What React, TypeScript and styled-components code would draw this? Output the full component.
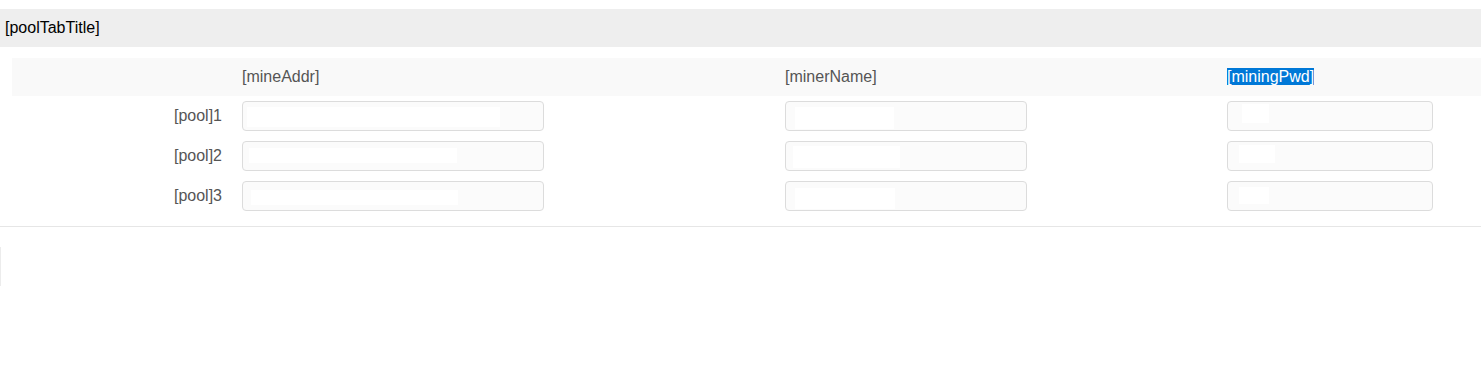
import React from 'react';
import styled, { createGlobalStyle } from 'styled-components';

const GlobalStyle = createGlobalStyle`
  body {
    margin: 0;
    background: #fff;
    font-family: "Liberation Sans", Arial, sans-serif;
  }
`;

const Page = styled.div`
  padding-top: 9px;
`;

const TabTitle = styled.div`
  background-color: #eeeeee;
  height: 38px;
  line-height: 38px;
  padding-left: 5px;
  font-size: 16px;
  color: #000;
`;

const PoolSection = styled.div`
  padding: 11px 0 10px 12px;
  border-bottom: 1px solid #e6e6e6;
`;

const PoolGrid = styled.div`
  display: grid;
  grid-template-columns: 220px 543px 442px 1fr;
`;

const HeaderCell = styled.div`
  background-color: #f9f9f9;
  height: 38px;
  line-height: 38px;
  padding: 0 10px;
  font-size: 16px;
  color: #555;
`;

const Selected = styled.span`
  background-color: #0078d7;
  color: #fff;
`;

const LabelCell = styled.div`
  height: 40px;
  line-height: 40px;
  padding-right: 10px;
  text-align: right;
  font-size: 16px;
  color: #555;
`;

const InputCell = styled.div`
  height: 40px;
  padding: 5px 10px;
  box-sizing: border-box;
`;

type Fill = [number, number, number, number];

// the filled-in value shows as a white patch inside the field
const PoolInput = styled.input<{ $width: number; $fill: Fill }>`
  display: block;
  box-sizing: border-box;
  width: ${p => p.$width}px;
  height: 30px;
  border: 1px solid #dcdcdc;
  border-radius: 4px;
  background-color: #fbfbfb;
  background-image: linear-gradient(#fff, #fff);
  background-repeat: no-repeat;
  background-origin: border-box;
  background-position: ${p => `${p.$fill[0]}px ${p.$fill[1]}px`};
  background-size: ${p => `${p.$fill[2]}px ${p.$fill[3]}px`};
  padding: 0 8px;
  font-family: "Liberation Sans", Arial, sans-serif;
  font-size: 14px;
  outline: none;
`;

const Footer = styled.div`
  margin-top: 20px;
  height: 39px;
  width: 0;
  border-left: 1px solid #ececec;
`;

const pools: { n: number; addr: Fill; name: Fill; pwd: Fill }[] = [
  { n: 1, addr: [5, 6, 253, 20], name: [10, 6, 99, 22], pwd: [15, 3, 27, 19] },
  { n: 2, addr: [7, 7, 208, 15], name: [8, 5, 107, 22], pwd: [12, 4, 36, 18] },
  { n: 3, addr: [9, 9, 207, 15], name: [10, 7, 100, 21], pwd: [12, 6, 30, 17] },
];

const App: React.FC = () => {
  return (
    <>
      <GlobalStyle />
      <Page>
        <TabTitle>[poolTabTitle]</TabTitle>
        <PoolSection>
          <PoolGrid>
            <HeaderCell />
            <HeaderCell>[mineAddr]</HeaderCell>
            <HeaderCell>[minerName]</HeaderCell>
            <HeaderCell>
              <Selected>[miningPwd]</Selected>
            </HeaderCell>
            {pools.map(pool => (
              <React.Fragment key={pool.n}>
                <LabelCell>[pool]{pool.n}</LabelCell>
                <InputCell>
                  <PoolInput type="text" $width={302} $fill={pool.addr} />
                </InputCell>
                <InputCell>
                  <PoolInput type="text" $width={242} $fill={pool.name} />
                </InputCell>
                <InputCell>
                  <PoolInput type="password" $width={206} $fill={pool.pwd} />
                </InputCell>
              </React.Fragment>
            ))}
          </PoolGrid>
        </PoolSection>
        <Footer />
      </Page>
    </>
  );
};

export default App;
